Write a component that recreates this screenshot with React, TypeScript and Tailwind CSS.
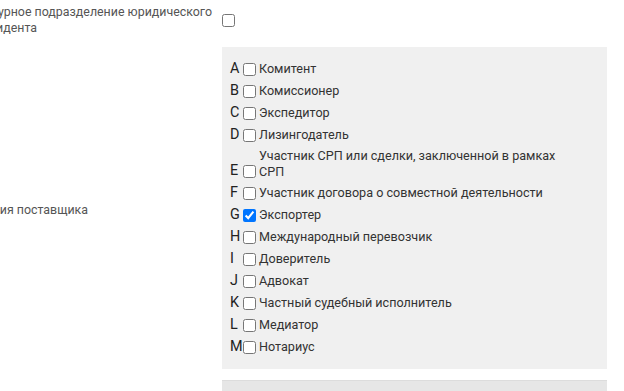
import React from "react";

const categories = [
  { key: "A", label: "Комитент" },
  { key: "B", label: "Комиссионер" },
  { key: "C", label: "Экспедитор" },
  { key: "D", label: "Лизингодатель" },
  { key: "E", label: "Участник СРП или сделки, заключенной в рамках СРП" },
  { key: "F", label: "Участник договора о совместной деятельности" },
  { key: "G", label: "Экспортер", checked: true },
  { key: "H", label: "Международный перевозчик" },
  { key: "I", label: "Доверитель" },
  { key: "J", label: "Адвокат" },
  { key: "K", label: "Частный судебный исполнитель" },
  { key: "L", label: "Медиатор" },
  { key: "M", label: "Нотариус" },
];

export default function App() {
  return (
    <div className="w-[624px] h-[391px] overflow-hidden bg-white font-['Roboto','Liberation_Sans',sans-serif] text-[13px]">
      <div className="grid grid-cols-[222px_385px]">
        {/* Нерезидент (label column is cut at the left edge) */}
        <div className="h-[40px] flex flex-col justify-center overflow-hidden text-[12.4px] leading-[16px] text-[#555] whitespace-nowrap">
          <div className="w-[212px] flex justify-end">
            <span className="shrink-0">Структурное подразделение юридического</span>
          </div>
          <div className="w-[37px] flex justify-end">
            <span className="shrink-0">лица-нерезидента</span>
          </div>
        </div>
        <div className="h-[40px] flex items-center">
          <input type="checkbox" className="m-0 w-[13px] h-[13px]" />
        </div>

        {/* Категория поставщика */}
        <div className="mt-[7px] pt-[4px] flex items-center overflow-hidden text-[12.4px] leading-[16px] text-[#555] whitespace-nowrap">
          <div className="w-[88px] flex justify-end">
            <span className="shrink-0">Категория поставщика</span>
          </div>
        </div>
        <div className="mt-[7px] h-[322px] bg-[#f0f0f0] pl-[8px] pt-[11px]">
          {categories.map((c) => (
            <label key={c.key} className="flex items-center min-h-[22px] text-[#333]">
              <span className="self-end h-[22px] flex items-center shrink-0">
                <span className="w-[13px] text-[14.4px] leading-[22px] text-[#222]">{c.key}</span>
                <input
                  type="checkbox"
                  defaultChecked={c.checked}
                  className="m-0 mr-[3px] w-[13px] h-[13px]"
                />
              </span>
              <span className="max-w-[310px] text-[12.6px] leading-[16px] py-[2px]">{c.label}</span>
            </label>
          ))}
        </div>

        <div />
        <div className="mt-[11px] h-[40px] bg-[#e6e6e6] border-t border-[#dcdcdc]" />
      </div>
    </div>
  );
}
